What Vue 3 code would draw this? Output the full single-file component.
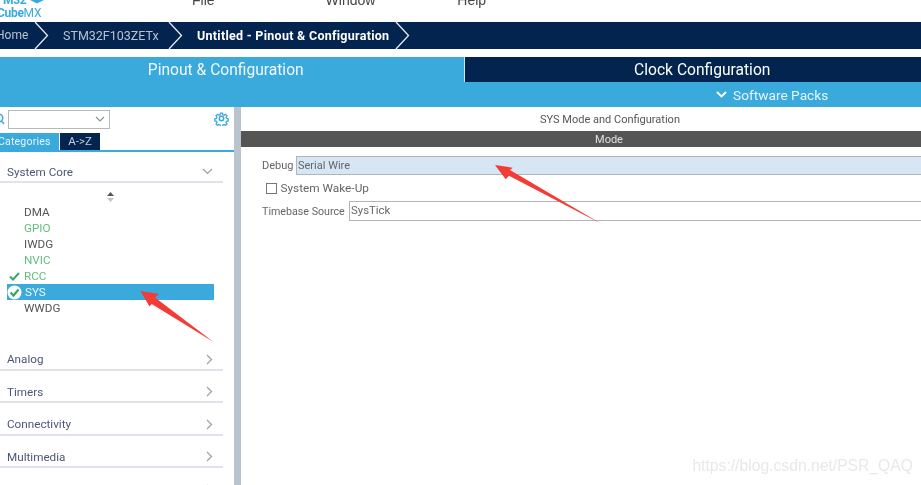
<script setup>
const crumbs = [
  { label: 'Home', cls: 'c-home' },
  { label: 'STM32F103ZETx', cls: 'c-chip' },
  { label: 'Untitled - Pinout & Configuration', cls: 'c-project' }
]
const peripherals = [
  { name: 'DMA', tone: '' },
  { name: 'GPIO', tone: 'green' },
  { name: 'IWDG', tone: '' },
  { name: 'NVIC', tone: 'green' },
  { name: 'RCC', tone: 'green', check: true },
  { name: 'SYS', tone: 'selected', badge: true },
  { name: 'WWDG', tone: '' }
]
const categories = ['Analog', 'Timers', 'Connectivity', 'Multimedia', 'Security']
</script>

<template>
  <div class="app">
    <header class="menu">
      <div class="logo"><span class="logo-top">M32</span><span class="logo-bottom">Cube<i>MX</i></span></div>
      <svg class="cube" width="14" height="4" viewBox="0 0 14 4"><path d="M0 0h14L7 3.500z" fill="#3aa9dc"/></svg>
      <div class="menu-items"><span class="m-file">File</span><span class="m-window">Window</span><span class="m-help">Help</span></div>
    </header>

    <nav class="crumbs">
      <template v-for="c in crumbs" :key="c.label">
        <span class="crumb" :class="c.cls">{{ c.label }}</span>
        <svg class="chev" width="15" height="27" viewBox="0 0 15 27"><polyline points="1,0 13.500,13.500 1,27" fill="none" stroke="#e8edf2" stroke-width="1.300"/></svg>
      </template>
    </nav>

    <section class="tabs">
      <div class="tab-row">
        <div class="tab active">Pinout &amp; Configuration</div>
        <div class="tab dark">Clock Configuration</div>
      </div>
      <div class="packs">
        <svg width="11" height="7" viewBox="0 0 11 7"><polyline points="1,1 5.500,5.500 10,1" fill="none" stroke="#fff" stroke-width="1.800"/></svg>
        <span>Software Packs</span>
      </div>
    </section>

    <main class="body">
      <aside class="side">
        <div class="search">
          <svg class="lens" width="11" height="12" viewBox="0 0 11 12"><circle cx="2" cy="5" r="3.800" fill="none" stroke="#3aa9dc" stroke-width="1.400"/><path d="M4.500 8l2.500 3" stroke="#3aa9dc" stroke-width="1.400"/></svg>
          <div class="combo">
            <svg width="10" height="6" viewBox="0 0 10 6"><polyline points="1,1 5,5 9,1" fill="none" stroke="#8b9298" stroke-width="1.200"/></svg>
          </div>
          <svg class="gear" width="15" height="15" viewBox="0 0 24 24" fill="none" stroke="#3aa9dc" stroke-width="2.400">
            <circle cx="12" cy="12" r="3.500"/>
            <path d="M10 2h4l.6 3 2.300 1 2.600-1.700 2.800 2.800-1.700 2.600 1 2.300 3 .6v4l-3 .6-1 2.300 1.700 2.600-2.800 2.800-2.600-1.700-2.300 1-.6 3h-4l-.6-3-2.300-1-2.600 1.700-2.800-2.800 1.700-2.600-1-2.300-3-.6v-4l3-.6 1-2.300-1.700-2.600 2.800-2.800 2.600 1.700 2.300-1z" transform="translate(1.800 1.800) scale(.85)"/>
          </svg>
        </div>
        <div class="side-tabs"><span class="st on">Categories</span><span class="st off">A-&gt;Z</span></div>

        <div class="cat open">
          <span>System Core</span>
          <svg width="11" height="7" viewBox="0 0 11 7"><polyline points="1,1 5.500,5.500 10,1" fill="none" stroke="#9aa0a6" stroke-width="1.200"/></svg>
        </div>
        <div class="sort"><svg width="7" height="10" viewBox="0 0 7 10"><path d="M3.500 0L7 4H0z" fill="#555"/><path d="M3.500 10L7 6H0z" fill="#c4c4c4"/></svg></div>
        <ul class="list">
          <li v-for="p in peripherals" :key="p.name" :class="p.tone">
            <svg v-if="p.check" class="tick" width="11" height="9" viewBox="0 0 11 9"><polyline points="1,4.500 4,7.500 10,1" fill="none" stroke="#35a86b" stroke-width="2"/></svg>
            <svg v-if="p.badge" class="badge" width="15" height="15" viewBox="0 0 15 15"><circle cx="7.500" cy="7.500" r="7" fill="#fff"/><polyline points="3.500,7.500 6.500,10.500 11.500,4.500" fill="none" stroke="#35a86b" stroke-width="2.200"/></svg>
            <span>{{ p.name }}</span>
          </li>
        </ul>

        <div v-for="c in categories" :key="c" class="cat closed">
          <span>{{ c }}</span>
          <svg width="7" height="11" viewBox="0 0 7 11"><polyline points="1,1 5.500,5.500 1,10" fill="none" stroke="#9aa0a6" stroke-width="1.200"/></svg>
        </div>
      </aside>

      <div class="splitter"></div>

      <section class="panel">
        <div class="panel-title">SYS Mode and Configuration</div>
        <div class="mode-bar">Mode</div>
        <div class="form">
          <div class="row debug"><label>Debug</label><div class="field sel">Serial Wire</div></div>
          <div class="row wake"><span class="box"></span><span>System Wake-Up</span></div>
          <div class="row base"><label>Timebase Source</label><div class="field tick-src">SysTick</div></div>
        </div>
      </section>
    </main>

    <svg class="arrow" width="921" height="485" viewBox="0 0 921 485">
      <path d="M140.500 291L159 294L155 297.500L213.500 342L151.700 304L149.500 306.500z" fill="#f23c35"/>
      <path d="M495 165L512.700 167.700L510 170L601.700 224L509 175.700L505.700 179.300z" fill="#f23c35"/>
    </svg>
    <div class="mark">https://blog.csdn.net/PSR_QAQ</div>
  </div>
</template>

<style>
html, body { margin: 0; background: #fff; overflow: hidden; }
</style>

<style scoped>
.app {
  position: relative;
  width: 921px;
  height: 485px;
  overflow: hidden;
  background: #fff;
  font-family: Roboto, "Liberation Sans", sans-serif;
  color: #555;
  display: flex;
  flex-direction: column;
  filter: blur(.35px);
}
.menu { height: 22px; flex: none; display: flex; position: relative; overflow: hidden; }
.logo {
  width: 33px;
  margin-left: -3px;
  display: flex;
  flex-direction: column;
  color: #3aa9dc;
  font-weight: 700;
  font-size: 12px;
  line-height: 12px;
  margin-top: -6px;
  letter-spacing: -.3px;
  white-space: nowrap;
}
.logo-top { padding-left: 6px; }
.logo i { font-style: normal; font-weight: 400; }
.logo-bottom { margin-top: 1px; }
.cube { flex: none; }
.menu-items { display: flex; font-size: 14px; line-height: 16px; margin-top: -8px; color: #444; font-family: "Liberation Sans", sans-serif; }
.m-file { margin-left: 148px; }
.m-window { margin-left: 111px; }
.m-help { margin-left: 82px; }

.crumbs {
  height: 27px;
  flex: none;
  background: #02244e;
  display: flex;
  align-items: center;
  font-size: 12.500px;
  color: #b9c4d2;
  white-space: nowrap;
}
.crumb { line-height: 27px; }
.c-home { margin-left: -3px; width: 37px; font-size: 12px; text-indent: -1px; }
.c-chip { margin-left: 14px; width: 105px; }
.c-project { margin-left: 14px; width: 198px; color: #fff; font-weight: 700; letter-spacing: .28px; }
.chev { flex: none; }

.tabs { margin-top: 8px; height: 50px; flex: none; background: #3aa9dc; display: flex; flex-direction: column; }
.tab-row { display: flex; height: 25px; margin-left: -12px; width: 952px; }
.tab { flex: 1; text-align: center; font-size: 15.600px; line-height: 27px; color: #fff; }
.tab.active { color: #f2f9fd; }
.tab.dark { background: #02244e; border-left: 1px solid #cfe6f3; }
.packs {
  flex: 1;
  display: flex;
  align-items: center;
  gap: 6px;
  padding-left: 716px;
  color: #e6f4fb;
  font-size: 13.700px;
}

.body { flex: 1; display: flex; min-height: 0; }
.side { width: 234px; flex: none; overflow: hidden; font-size: 11.700px; }
.search { height: 26px; display: flex; align-items: center; position: relative; }
.lens { flex: none; margin-left: -3px; margin-top: -3px; }
.combo {
  width: 102px;
  height: 19px;
  border: 1px solid #b4b9bd;
  display: flex;
  align-items: center;
  justify-content: flex-end;
  padding-right: 4px;
  box-sizing: border-box;
  margin-top: -2px;
}
.gear { margin-left: 104px; margin-top: -4px; flex: none; }
.side-tabs {
  height: 19px;
  display: flex;
  box-sizing: border-box;
  border-bottom: 2px solid #3aa9dc;
  font-size: 11.500px;
  line-height: 17px;
}
.st { display: block; height: 17px; text-align: center; }
.on { width: 59px; background: #3aa9dc; color: #e8f5fb; font-size: 10.500px; letter-spacing: .2px; text-align: left; text-indent: -2px; white-space: nowrap; }
.off { width: 40px; background: #02244e; color: #c4cfdb; margin-left: 1px; }

.cat {
  width: 223px;
  box-sizing: border-box;
  display: flex;
  align-items: center;
  justify-content: space-between;
  padding: 0 10px 0 7px;
  border-bottom: 2px solid #dfe4ea;
  color: #4c5577;
  font-size: 11.700px;
}
.cat.open { height: 31px; padding-top: 10px; }
.cat.closed { height: 32.500px; padding-top: 12px; }
.sort { height: 14px; display: flex; justify-content: center; width: 220px; align-items: center; margin-top: 7px; }
.list { list-style: none; margin: 0 0 22px; padding: 0 0 0 7px; width: 207px; }
.list li {
  height: 16px;
  line-height: 16px;
  padding-left: 17px;
  position: relative;
  color: #555;
  width: 190px;
}
.list li.green { color: #62bf7f; }
.list li.selected { background: #3aa9dc; color: #eaf6fc; padding-left: 18px; width: 189px; }
.tick { position: absolute; left: 2px; top: 4px; }
.badge { position: absolute; left: 0; top: .5px; }

.splitter { width: 7px; flex: none; background: #b9c4cc; }
.panel { width: 738px; flex: none; font-size: 11px; }
.panel-title { height: 24px; line-height: 25px; text-align: center; color: #555; }
.mode-bar { height: 16px; line-height: 17px; text-align: center; background: #555; color: #e0e0e0; padding-right: 2px; }
.form { color: #666; }
.row { display: flex; align-items: center; white-space: nowrap; }
.debug { height: 19px; margin-top: 9px; padding-left: 21px; }
.debug label { width: 34px; }
.wake { height: 20px; margin-top: 3px; padding-left: 25px; gap: 3.500px; font-size: 11.800px; }
.base { height: 20px; margin-top: 3px; padding-left: 21px; }
.base label { width: 87px; font-size: 10.700px; }
.box { width: 9px; height: 9px; border: 1px solid #777; flex: none; }
.field {
  flex: 1;
  height: 100%;
  box-sizing: border-box;
  border: 1px solid #b0b5ba;
  line-height: 17px;
  padding-left: 1px;
  color: #666;
  font-size: 11px;
}
.field.sel { background: #d6e6f4; }
.field.tick-src { font-size: 11.400px; }

.arrow { position: absolute; left: 0; top: 0; pointer-events: none; }
.mark {
  position: absolute;
  right: 8px;
  top: 457px;
  font-family: "Liberation Sans", sans-serif;
  font-size: 15.700px;
  color: #e8e8e8;
  pointer-events: none;
}
</style>
